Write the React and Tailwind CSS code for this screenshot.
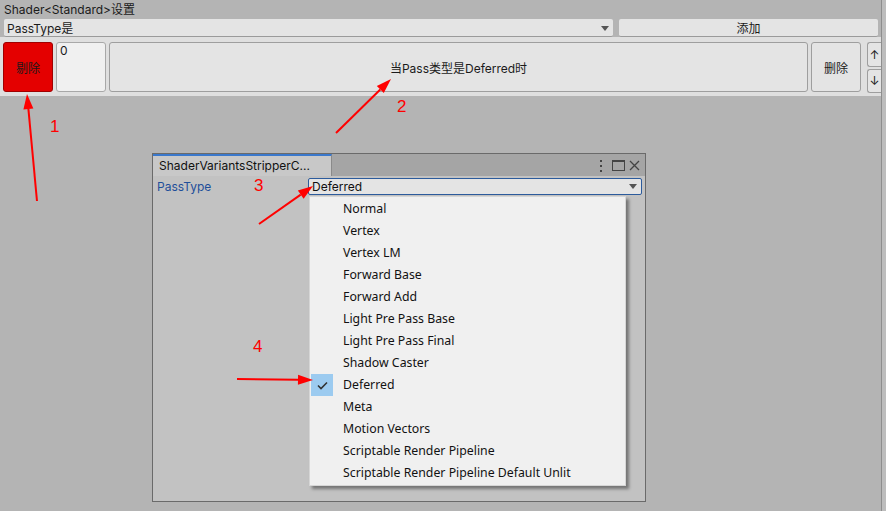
import React from "react";

const items = [
  "Normal",
  "Vertex",
  "Vertex LM",
  "Forward Base",
  "Forward Add",
  "Light Pre Pass Base",
  "Light Pre Pass Final",
  "Shadow Caster",
  "Deferred",
  "Meta",
  "Motion Vectors",
  "Scriptable Render Pipeline",
  "Scriptable Render Pipeline Default Unlit",
];

function Arrow({ x1, y1, x2, y2 }) {
  const ang = Math.atan2(y2 - y1, x2 - x1);
  const len = 15;
  const w = 5;
  const bx = x2 - len * Math.cos(ang);
  const by = y2 - len * Math.sin(ang);
  const px = -Math.sin(ang) * w;
  const py = Math.cos(ang) * w;
  return (
    <g>
      <line x1={x1} y1={y1} x2={bx} y2={by} stroke="#ff0000" strokeWidth="2" />
      <polygon
        points={`${x2},${y2} ${bx + px},${by + py} ${bx - px},${by - py}`}
        fill="#ff0000"
      />
    </g>
  );
}

export default function App() {
  return (
    <div className="relative w-[886px] h-[511px] overflow-hidden bg-[#b4b4b4] font-[Inter,'Noto_Sans_CJK_SC',sans-serif] text-[#1b1b1b] flex">
      <div className="w-[881px] flex flex-col">
        <div className="h-[19px] pl-[4px] text-[12px] leading-[19px]">Shader&lt;Standard&gt;设置</div>
        <div className="h-[18px] flex gap-[6px] pl-[4px] pr-[3px]">
          <div className="w-[609px] h-[18px] bg-[#e4e4e4] border-b border-[#9a9a9a] rounded-[2px] flex items-center justify-between pl-[3px] pr-[4px] pt-[2px] text-[12px]">
            <span>PassType是</span>
            <svg width="8" height="5" viewBox="0 0 8 5"><polygon points="0,0 8,0 4,5" fill="#555" /></svg>
          </div>
          <div className="flex-1 h-[18px] bg-[#e4e4e4] border-b border-[#9a9a9a] rounded-[2px] flex items-center justify-center pt-[2px] text-[12px]">添加</div>
        </div>
        <div className="h-[59px] bg-[#dfdfdf] flex items-start gap-[3px] pl-[3px] pt-[5px]">
          <div className="w-[50px] h-[50px] bg-[#e40000] border border-[#a00000] rounded-[3px] flex items-center justify-center pt-[3px] text-[12px] text-[#1a1a1a]">剔除</div>
          <div className="w-[50px] h-[50px] bg-[#f0f0f0] border border-[#a8a8a8] rounded-[3px] text-[12px] pl-[3px] pt-[1px] leading-[14px]">0</div>
          <div className="w-[699px] h-[50px] bg-[#e4e4e4] border border-[#9e9e9e] rounded-[3px] flex items-center justify-center pt-[3px] text-[12px]">当Pass类型是Deferred时</div>
          <div className="w-[50px] h-[50px] bg-[#e4e4e4] border border-[#9e9e9e] rounded-[3px] flex items-center justify-center pt-[3px] text-[12px]">删除</div>
          <div className="ml-[3px] flex-1 flex flex-col gap-[2px]">
            <div className="h-[25px] bg-[#e4e4e4] border border-r-0 border-[#9e9e9e] rounded-l-[3px] flex items-center justify-center text-[12px]">↑</div>
            <div className="h-[24px] bg-[#e4e4e4] border border-r-0 border-[#9e9e9e] rounded-l-[3px] flex items-center justify-center text-[12px]">↓</div>
          </div>
        </div>
      </div>
      <div className="w-[5px] border-l border-[#8e8e8e] bg-[#bdbdbd]"></div>

      {/* floating editor window */}
      <div className="absolute left-[152px] top-[153px] w-[494px] h-[349px] border border-[#6a6a6a] bg-[#c2c2c2] flex flex-col">
        <div className="h-[22px] bg-[#a5a5a5] flex items-stretch">
          <div className="w-[179px] bg-[#c8c8c8] border-t-2 border-[#3a78cc] border-r border-r-[#8a8a8a] text-[12px] leading-[19px] pl-[6px] text-[#111]">ShaderVariantsStripperC...</div>
          <div className="flex-1 flex items-center justify-end gap-[4px] pr-[5px] pt-[1px]">
            <svg width="4" height="12" viewBox="0 0 4 12"><rect x="1" y="0" width="2" height="2" fill="#444" /><rect x="1" y="5" width="2" height="2" fill="#444" /><rect x="1" y="10" width="2" height="2" fill="#444" /></svg>
            <svg width="13" height="11" viewBox="0 0 13 11" className="ml-[5px]"><rect x="0.5" y="0.5" width="12" height="10" fill="none" stroke="#444" /><rect x="0" y="0" width="13" height="2" fill="#444" /></svg>
            <svg width="11" height="11" viewBox="0 0 11 11"><path d="M1 1 L10 10 M10 1 L1 10" stroke="#444" strokeWidth="1.3" /></svg>
          </div>
        </div>
        <div className="flex items-center h-[19px] mt-[1px] pl-[4px] pr-[3px]">
          <span className="w-[151px] text-[12px] text-[#1f4f9a]">PassType</span>
          <div className="flex-1 h-[17px] bg-[#e4e4e4] border border-[#2c5b9c] rounded-[2px] flex items-center justify-between pl-[3px] pr-[4px] text-[12px] text-[#111]">
            <span>Deferred</span>
            <svg width="8" height="5" viewBox="0 0 8 5"><polygon points="0,0 8,0 4,5" fill="#555" /></svg>
          </div>
        </div>
      </div>

      {/* popup menu */}
      <div className="absolute left-[309px] top-[196px] w-[317px] h-[290px] bg-[#f0f0f0] border border-[#d6d6d6] shadow-[3px_3px_3px_rgba(0,0,0,0.4)] pt-[1px] font-['Noto_Sans',sans-serif] text-[12.3px] text-[#121212]">
        {items.map((it) => (
          <div key={it} className="h-[22px] flex items-center">
            <div className="w-[22px] h-[22px] ml-[1px] mr-[10px] flex items-center justify-center">
              {it === "Deferred" && (
                <div className="w-[22px] h-[22px] bg-[#9ccbf0] flex items-center justify-center">
                  <svg width="11" height="9" viewBox="0 0 11 9"><path d="M1 4.5 L4 7.5 L10 1.5" fill="none" stroke="#333" strokeWidth="1.6" /></svg>
                </div>
              )}
            </div>
            <span className="leading-[22px]">{it}</span>
          </div>
        ))}
      </div>

      {/* annotations */}
      <svg className="absolute left-0 top-0 pointer-events-none" width="886" height="511">
        <Arrow x1={37} y1={201} x2={27} y2={94} />
        <Arrow x1={336} y1={133} x2={391} y2={79} />
        <Arrow x1={259} y1={224} x2={313} y2={186} />
        <Arrow x1={237} y1={379} x2={313} y2={380} />
      </svg>
      <div className="absolute left-[50px] top-[117px] text-[17px] leading-[20px] text-[#ff0000] font-['Liberation_Sans',sans-serif]">1</div>
      <div className="absolute left-[397px] top-[97px] text-[17px] leading-[20px] text-[#ff0000] font-['Liberation_Sans',sans-serif]">2</div>
      <div className="absolute left-[254px] top-[176px] text-[17px] leading-[20px] text-[#ff0000] font-['Liberation_Sans',sans-serif]">3</div>
      <div className="absolute left-[253px] top-[337px] text-[17px] leading-[20px] text-[#ff0000] font-['Liberation_Sans',sans-serif]">4</div>
    </div>
  );
}
